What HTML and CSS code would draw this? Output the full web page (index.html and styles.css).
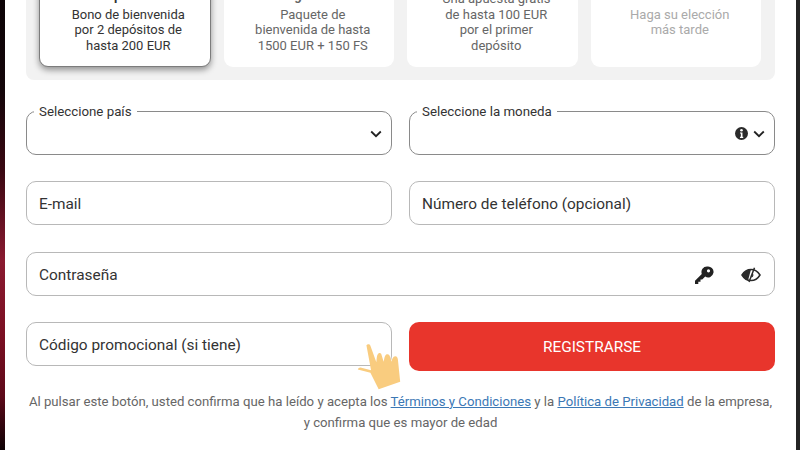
FILE: index.html
```html
<!DOCTYPE html>
<html lang="es">
<head>
<meta charset="utf-8">
<title>Registro</title>
<link rel="stylesheet" href="styles.css">
</head>
<body>
<div class="modal">
  <div class="bonus-group">
    <div class="bonus selected"><b>depósitos</b><span>Bono de bienvenida<br>por 2 depósitos de<br>hasta 200 EUR</span></div>
    <div class="bonus"><b>Integralmente</b><span>Paquete de<br>bienvenida de hasta<br>1500 EUR + 150 FS</span></div>
    <div class="bonus"><span>Una apuesta gratis<br>de hasta 100 EUR<br>por el primer<br>depósito</span></div>
    <div class="bonus muted"><b>Decidir más tarde</b><span>Haga su elección<br>más tarde</span></div>
  </div>
  <form class="form">
    <div class="field dark"><span class="legend">Seleccione país</span>
      <svg class="chev" viewBox="0 0 12 8"><path d="M1.200 1.500 6 6.200l4.800-4.700"/></svg></div>
    <div class="field dark"><span class="legend">Seleccione la moneda</span>
      <svg class="info" viewBox="0 0 12 12"><circle cx="6" cy="6" r="6"/><circle cx="6" cy="3" r="1.200" fill="#fff"/><path d="M4.600 5h2.300v4h.7v1.100H4.600V9h.8V6.100h-.8z" fill="#fff"/></svg>
      <svg class="chev" viewBox="0 0 12 8"><path d="M1.200 1.500 6 6.200l4.800-4.700"/></svg></div>
    <div class="field"><span class="ph">E-mail</span></div>
    <div class="field"><span class="ph">Número de teléfono (opcional)</span></div>
    <div class="field wide"><span class="ph">Contraseña</span>
      <span class="icons-wide">
        <svg class="key" viewBox="0 0 20 20"><path fill-rule="evenodd" d="M13 1.500a5.500 5.500 0 0 0-5.200 7.400L1 15.700V19h3.300v-2.200h2.200v-2.200h1.700l3-3A5.500 5.500 0 1 0 13 1.500zm1.500 2.700a1.600 1.600 0 1 1 0 3.200 1.600 1.600 0 0 1 0-3.200z"/></svg>
        <svg class="eye" viewBox="0 0 20 16"><path class="eye-line" d="M1 8c2.300-3.800 5.500-5.600 9-5.600s6.700 1.800 9 5.600c-2.300 3.800-5.500 5.600-9 5.600S3.300 11.800 1 8z"/><path d="M1 8c2.300-3.800 5.500-5.600 9-5.600l-3 11C4.500 12.800 2.500 10.700 1 8z"/><path class="eye-line" d="M13.500 .8 8 15"/><path class="eye-cut" d="M11 6.500a2 2 0 0 1-.5 3.500"/></svg>
      </span></div>
    <div class="field"><span class="ph">Código promocional (si tiene)</span></div>
    <button class="submit" type="button">REGISTRARSE</button>
  </form>
  <p class="terms">Al pulsar este botón, usted confirma que ha leído y acepta los <a href="#">Términos y Condiciones</a> y la <a href="#">Política de Privacidad</a> de la empresa,<br>y confirma que es mayor de edad</p>
  <svg class="hand" viewBox="50 38 135 145"><path d="M78 45c3-5 10-4 12 1l18 50c1-9 1-23 7-27 5-2 8 1 9 6l6 20c2-9 3-22 10-23 6-1 8 3 9 7l5 16c1-7 4-17 11-17 6 0 7 5 8 9l7 68-65 23-25-50-38-10c1-3 4-6 8-6l32 8z"/></svg>
</div>
</body>
</html>
```

FILE: styles.css
```css
* { box-sizing: border-box; }
html, body { margin: 0; height: 100%; }
body {
  width: 800px;
  height: 450px;
  overflow: hidden;
  padding: 0 4px 0 5px;
  background-color: #242424;
  background-image: linear-gradient(180deg, #0c0306 0%, #14060a 20%, #3a0812 38%, #8a1a30 58%, #7a0f22 75%, #5e0a1a 88%, #0e0205 100%);
  background-size: 5px 100%;
  background-repeat: no-repeat;
  font-family: Roboto, "Liberation Sans", sans-serif;
}
.modal {
  position: relative;
  width: 791px;
  height: 450px;
  background: #fff;
  padding: 0 21px;
  overflow: hidden;
}
.bonus-group {
  height: 122px;
  margin-top: -42px;
  padding: 0 14px 13px 13px;
  background: #f2f2f2;
  border-radius: 0 0 8px 8px;
  display: flex;
  gap: 13px;
}
.bonus {
  flex: 1 1 0;
  min-width: 0;
  background: #fff;
  border-radius: 9px;
  text-align: center;
  font-size: 13px;
  line-height: 15.500px;
  color: #666;
  padding: 30px 0 0 8px;
}
.bonus > span:first-child { margin-top: 3px; }
.bonus b { font-weight: 700; display: block; margin-bottom: 3px; }
.bonus span { display: block; }
.bonus.selected {
  color: #333;
  border: 1px solid #7c7c7c;
  padding: 29px 0 0 7px;
  box-shadow: 0 3px 6px rgba(0,0,0,.4);
}
.bonus.muted { color: #aaa; }
.form {
  margin-top: 31px;
  display: grid;
  grid-template-columns: 366px 366px;
  column-gap: 17px;
  row-gap: 26.300px;
}
.field {
  position: relative;
  height: 44px;
  border: 1px solid #b8b8b8;
  border-radius: 10px;
  display: flex;
  align-items: center;
  padding: 2px 12px 0;
  font-size: 15.400px;
  color: #333;
}
.field.dark { border-color: #8a8a8a; }
.field.wide { grid-column: 1 / 3; }
.legend {
  position: absolute;
  left: 7px;
  top: -8px;
  padding: 0 5px;
  background: #fff;
  font-size: 13.300px;
  line-height: 16px;
  color: #333;
}
.chev { position: absolute; right: 9px; top: 18px; width: 12px; height: 8px; fill: none; stroke: #222; stroke-width: 1.800; }
.info { position: absolute; right: 26px; top: 15px; width: 13px; height: 13px; fill: #2b2b2b; }
.icons-wide { position: absolute; right: 13px; top: 12px; display: flex; align-items: center; gap: 27px; }
.key { width: 20px; height: 20px; fill: #222; }
.eye { width: 20px; height: 16px; fill: #2b2b2b; }
.eye-line { fill: none; stroke: #2b2b2b; stroke-width: 1.500; }
.eye-cut { fill: none; stroke: #2b2b2b; stroke-width: 1.200; }
.submit {
  height: 49px;
  border: 0;
  border-radius: 10px;
  padding: 2px 0 0;
  background: #e8352c;
  color: #fff;
  font: 400 15.400px Roboto, "Liberation Sans", sans-serif;
}
.terms {
  margin: 20px 0 0;
  text-align: center;
  font-size: 13.180px;
  line-height: 21px;
  color: #666;
}
.terms a { color: #3b78b5; }
.hand { position: absolute; left: 352px; top: 343px; width: 45px; height: 48px; fill: #f9cc7f; }
```
